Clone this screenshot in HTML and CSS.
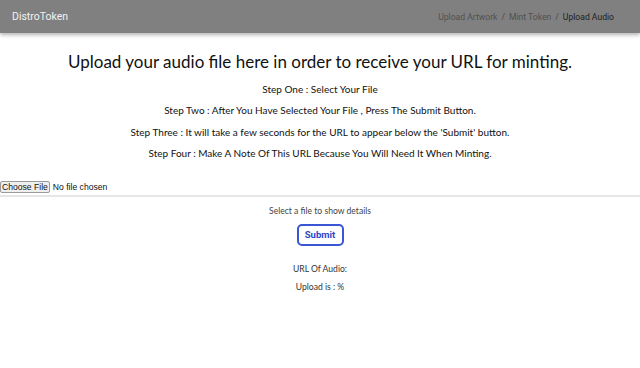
FILE: index.html
```html
<!DOCTYPE html>
<html lang="en">
<head>
    <meta charset="UTF-8">
    <title>DistroToken - Upload Audio</title>
    <link rel="stylesheet" href="styles.css">
</head>
<body>
    <nav class="navbar">
        <span class="brand">DistroToken</span>
        <div class="crumbs">
            <a href="#">Upload Artwork</a>
            <span class="sep">/</span>
            <a href="#">Mint Token</a>
            <span class="sep">/</span>
            <span class="current">Upload Audio</span>
        </div>
    </nav>

    <div class="intro">
        <h1>Upload your audio file here in order to receive your URL for minting.</h1>
        <p>Step One : Select Your File</p>
        <p>Step Two : After You Have Selected Your File , Press The Submit Button.</p>
        <p>Step Three : It will take a few seconds for the URL to appear below the 'Submit' button.</p>
        <p>Step Four : Make A Note Of This URL Because You Will Need It When Minting.</p>
    </div>

    <div class="upload">
        <input type="file" class="file-input">
    </div>

    <div class="details">
        <p class="hint">Select a file to show details</p>
        <button class="submit">Submit</button>
        <p class="result">URL Of Audio:</p>
        <p class="result">Upload is : %</p>
    </div>
</body>
</html>
```

FILE: styles.css
```css
* { margin: 0; padding: 0; box-sizing: border-box; }

body {
    font-family: Lato, "Noto Sans", sans-serif;
    background: #ffffff;
    color: #111111;
}

.navbar {
    height: 33px;
    background: #808080;
    display: flex;
    align-items: center;
    justify-content: space-between;
    padding: 0 26px 0 12px;
    box-shadow: 0 2px 4px rgba(0, 0, 0, 0.3);
    font-family: Roboto, sans-serif;
}

.brand {
    color: #f2f2f2;
    font-size: 10.5px;
}

.crumbs {
    display: flex;
    gap: 4px;
    font-size: 8.6px;
    color: #4a4a4a;
}

.crumbs a {
    color: #505050;
    text-decoration: none;
}

.crumbs .current {
    color: #1e1e1e;
}

.intro {
    text-align: center;
    padding-top: 18px;
}

.intro h1 {
    font-size: 17px;
    line-height: 22px;
    font-weight: 400;
    margin-bottom: 10px;
    color: #111111;
}

.intro p {
    font-size: 10px;
    line-height: 12px;
    margin-bottom: 9.3px;
}

.upload {
    margin-top: 22px;
    padding-bottom: 2px;
    border-bottom: 2px solid #e6e6e6;
}

.file-input {
    display: block;
    height: 12px;
    font-family: "Liberation Sans", Arial, sans-serif;
    font-size: 8.6px;
}

.file-input::file-selector-button {
    font: inherit;
    padding: 0 1px;
    height: 12px;
    line-height: 10px;
    margin-right: 3px;
    background: #efefef;
    border: 1px solid #9a9a9a;
    border-radius: 2px;
    color: #111111;
}

.details {
    display: flex;
    flex-direction: column;
    align-items: center;
    padding-top: 9px;
    font-size: 8.6px;
    color: #333333;
}

.hint {
    line-height: 10px;
    color: #444444;
}

.submit {
    margin-top: 8px;
    width: 47px;
    height: 22px;
    background: #ffffff;
    border: 2px solid #3b56d4;
    border-radius: 5px;
    color: #2c45cc;
    font-family: Roboto, sans-serif;
    font-weight: 700;
    font-size: 9.5px;
}

.result {
    line-height: 11px;
    margin-top: 18px;
}

.result + .result {
    margin-top: 7px;
}
```
